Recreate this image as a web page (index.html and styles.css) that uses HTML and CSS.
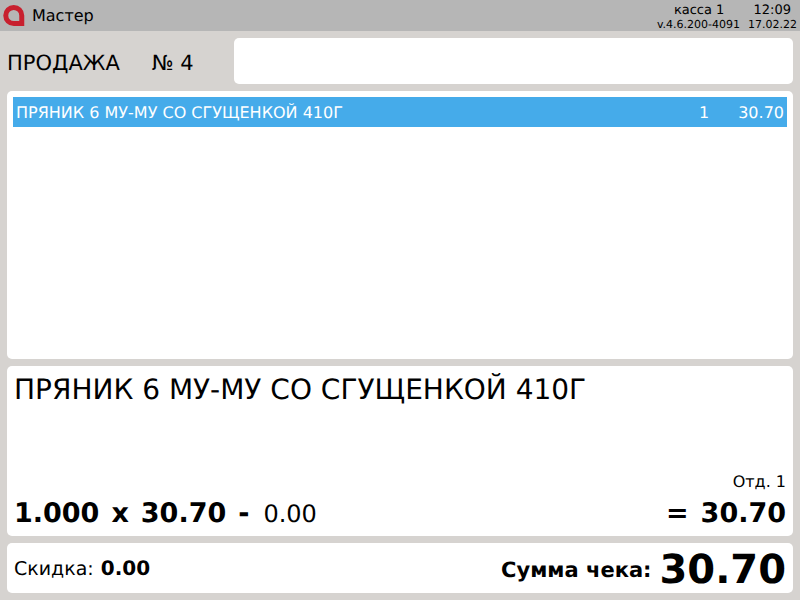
FILE: index.html
```
<!DOCTYPE html>
<html lang="ru">
<head>
<meta charset="utf-8">
<title>Мастер</title>
<link rel="stylesheet" href="styles.css">
</head>
<body>
<header class="topbar">
  <svg class="logo" width="22" height="21" viewBox="0 0 22 21"><path d="M10.750 2.500a8 8 0 1 0 0 16h8v-8a8 8 0 0 0-8-8z" fill="none" stroke="#c8202f" stroke-width="5"/></svg>
  <span class="app-name">Мастер</span>
  <div class="status">
    <div class="status-row"><span>касса 1</span><span class="clock">12:09</span></div>
    <div class="status-row small"><span>v.4.6.200-4091</span><span>17.02.22</span></div>
  </div>
</header>
<main class="content">
  <section class="head-row">
    <div class="mode"><span>ПРОДАЖА</span><span>№ 4</span></div>
    <div class="input-box"></div>
  </section>
  <section class="card list">
    <div class="row"><span class="row-name">ПРЯНИК 6 МУ-МУ СО СГУЩЕНКОЙ 410Г</span><span class="row-qty">1</span><span class="row-sum">30.70</span></div>
  </section>
  <section class="card detail">
    <div class="detail-name">ПРЯНИК 6 МУ-МУ СО СГУЩЕНКОЙ 410Г</div>
    <div class="dept">Отд. 1</div>
    <div class="calc">
      <b>1.000</b><b>x</b><b>30.70</b><b>-</b><span>0.00</span>
      <b class="calc-total">=</b><b>30.70</b>
    </div>
  </section>
  <section class="card footer">
    <span class="discount">Скидка: <b class="discount-value">0.00</b></span>
    <b class="sum-label">Сумма чека:</b>
    <b class="sum-value">30.70</b>
  </section>
</main>
</body>
</html>
```
FILE: styles.css
```
* { box-sizing: border-box; }
html, body { margin: 0; height: 100%; }
body { width: 800px; height: 600px; overflow: hidden; background: #d6d3d0; color: #000; font-family: "DejaVu Sans", sans-serif; text-rendering: geometricPrecision; display: flex; flex-direction: column; }
.topbar { height: 31px; background: #b6b6b6; display: flex; align-items: center; padding: 0 3px; flex: none; }
.logo { flex: none; margin-right: 7px; }
.app-name { font-size: 16px; }
.status { margin-left: auto; font-size: 13px; display: flex; flex-direction: column; }
.status-row { display: flex; justify-content: space-between; padding: 3px 6px 0 17px; height: 17px; align-items: center; }
.status-row.small { font-size: 11px; padding: 0; gap: 8px; height: 14px; }
.content { flex: 1; display: flex; flex-direction: column; gap: 7px; padding: 7px; }
.head-row { display: flex; height: 46px; align-items: center; flex: none; }
.mode { width: 227px; font-size: 21px; display: flex; gap: 32px; padding-top: 3px; }
.input-box { flex: 1; height: 46px; background: #fff; border-radius: 5px; }
.card { background: #fff; border-radius: 5px; flex: none; }
.list { height: 268px; padding: 6px; }
.row { height: 30px; background: #45abea; color: #fff; display: flex; align-items: center; font-size: 16px; padding: 1px 3px 0; }
.row-name { flex: 1; }
.row-qty { margin-right: 29px; }
.detail { height: 170px; padding: 7px; display: flex; flex-direction: column; }
.detail-name { font-size: 28px; }
.dept { margin-top: auto; margin-bottom: 7px; text-align: right; font-size: 16px; }
.calc { display: flex; gap: 12px; align-items: baseline; font-size: 27px; }
.calc span { font-size: 24px; margin-left: 2px; }
.calc-total { margin-left: auto; }
.footer { height: 50px; padding: 0 7px; display: flex; align-items: center; }
.discount { font-size: 19px; }
.discount-value { font-size: 20px; margin-left: 1px; }
.sum-label { margin-left: auto; font-size: 21px; margin-right: 8px; padding-top: 3px; }
.sum-value { font-size: 40px; padding-top: 3px; }
```
